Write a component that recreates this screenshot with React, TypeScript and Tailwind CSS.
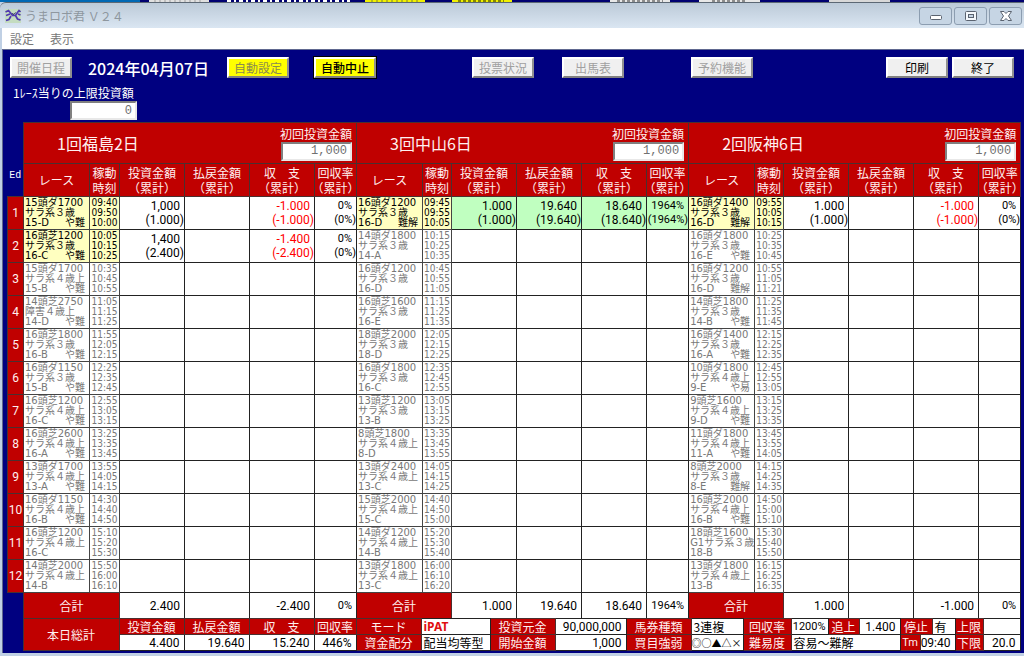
import React, { useState } from "react";
import clsx from "clsx";

interface Result {
  bet: [string, string];
  payout?: [string, string];
  balance: [string, string];
  rate: [string, string];
  hit?: boolean;
}

interface Race {
  title: string;
  grade: string;
  code: string;
  level?: string;
  times: [string, string, string];
  result?: Result;
}

interface Venue {
  id: string;
  name: string;
  races: Race[];
  total: [string, string, string, string];
}

const race = (
  title: string,
  grade: string,
  code: string,
  level: string,
  times: string,
  result?: Result
): Race => ({
  title,
  grade,
  code,
  level,
  times: times.split(" ") as [string, string, string],
  result,
});

const venues: Venue[] = [
  {
    id: "fukushima",
    name: "1回福島2日",
    total: ["2.400", "", "-2.400", "0%"],
    races: [
      race("15頭ダ1700", "サラ系３歳", "15-D", "や難", "09:40 09:50 10:00", {
        bet: ["1,000", "(1.000)"],
        balance: ["-1.000", "(-1.000)"],
        rate: ["0%", "(0%)"],
      }),
      race("16頭芝1200", "サラ系３歳", "16-C", "や難", "10:05 10:15 10:25", {
        bet: ["1,400", "(2.400)"],
        balance: ["-1.400", "(-2.400)"],
        rate: ["0%", "(0%)"],
      }),
      race("15頭ダ1700", "サラ系４歳上", "15-B", "や難", "10:35 10:45 10:55"),
      race("14頭芝2750", "障害４歳上", "14-D", "や難", "11:05 11:15 11:25"),
      race("16頭芝1800", "サラ系３歳", "16-B", "や難", "11:55 12:05 12:15"),
      race("16頭ダ1150", "サラ系３歳", "15-B", "や難", "12:25 12:35 12:45"),
      race("16頭芝1200", "サラ系４歳上", "16-C", "や難", "12:55 13:05 13:15"),
      race("16頭芝2600", "サラ系４歳上", "16-A", "や難", "13:25 13:35 13:45"),
      race("13頭ダ1700", "サラ系４歳上", "13-A", "や難", "13:55 14:05 14:15"),
      race("16頭ダ1150", "サラ系４歳上", "16-B", "や難", "14:30 14:40 14:50"),
      race("16頭芝1200", "サラ系４歳上", "16-C", "", "15:10 15:20 15:30"),
      race("14頭芝2000", "サラ系４歳上", "14-B", "", "15:50 16:00 16:10"),
    ],
  },
  {
    id: "nakayama",
    name: "3回中山6日",
    total: ["1.000", "19.640", "18.640", "1964%"],
    races: [
      race("16頭ダ1200", "サラ系３歳", "16-D", "難解", "09:45 09:55 10:05", {
        bet: ["1.000", "(1.000)"],
        payout: ["19.640", "(19.640)"],
        balance: ["18.640", "(18.640)"],
        rate: ["1964%", "(1964%)"],
        hit: true,
      }),
      race("14頭ダ1800", "サラ系３歳", "14-A", "", "10:15 10:25 10:35"),
      race("16頭ダ1200", "サラ系３歳", "16-D", "", "10:45 10:55 11:05"),
      race("16頭芝1600", "サラ系３歳", "16-E", "", "11:15 11:25 11:35"),
      race("18頭芝2000", "サラ系３歳", "18-D", "", "12:05 12:15 12:25"),
      race("16頭ダ1800", "サラ系３歳", "16-C", "", "12:35 12:45 12:55"),
      race("13頭芝1200", "サラ系３歳", "13-B", "", "13:05 13:15 13:25"),
      race("8頭芝1800", "サラ系４歳上", "8-D", "", "13:35 13:45 13:55"),
      race("13頭ダ2400", "サラ系４歳上", "13-C", "", "14:05 14:15 14:25"),
      race("15頭芝2000", "サラ系４歳上", "15-C", "", "14:40 14:50 15:00"),
      race("14頭ダ1200", "サラ系４歳上", "14-B", "", "15:20 15:30 15:40"),
      race("13頭ダ1800", "サラ系４歳上", "13-C", "", "16:00 16:10 16:20"),
    ],
  },
  {
    id: "hanshin",
    name: "2回阪神6日",
    total: ["1.000", "", "-1.000", "0%"],
    races: [
      race("16頭ダ1400", "サラ系３歳", "16-D", "難解", "09:55 10:05 10:15", {
        bet: ["1.000", "(1.000)"],
        balance: ["-1.000", "(-1.000)"],
        rate: ["0%", "(0%)"],
      }),
      race("16頭ダ1800", "サラ系３歳", "16-E", "や難", "10:25 10:35 10:45"),
      race("16頭ダ1200", "サラ系３歳", "16-D", "難解", "10:55 11:05 11:21"),
      race("14頭芝1800", "サラ系３歳", "14-B", "や難", "11:25 11:35 11:45"),
      race("16頭ダ1400", "サラ系３歳", "16-A", "や難", "12:15 12:25 12:35"),
      race("10頭ダ1800", "サラ系４歳上", "9-E", "や易", "12:45 12:55 13:05"),
      race("9頭芝1600", "サラ系４歳上", "9-D", "や難", "13:15 13:25 13:35"),
      race("11頭ダ1800", "サラ系４歳上", "11-A", "や難", "13:45 13:55 14:05"),
      race("8頭芝2000", "サラ系３歳", "8-E", "難解", "14:15 14:25 14:35"),
      race("16頭芝2000", "サラ系４歳上", "16-B", "や難", "14:50 15:00 15:10"),
      race("18頭芝1600", "G1サラ系３歳", "18-B", "", "15:30 15:40 15:50"),
      race("13頭ダ1800", "サラ系４歳上", "13-B", "", "16:15 16:25 16:35"),
    ],
  },
];

const numFont = "font-['Roboto','Noto_Sans_CJK_JP',sans-serif]";
const raceFont = "font-['DejaVu_Sans','Noto_Sans_CJK_JP',sans-serif] text-[10px] leading-[10px]";
const timeFont =
  "font-['DejaVu_Sans_Condensed','Liberation_Sans',sans-serif] text-[10px] leading-[10px]";
const redCell = "border border-[#4a3030] bg-[#c00000] text-[#fff0f0] font-normal p-0";
const whiteCell = "border border-[#222] bg-white text-black p-0";

interface FormButtonProps {
  children: React.ReactNode;
  tone?: "gray" | "yellow";
  disabled?: boolean;
  focused?: boolean;
  className?: string;
}

const FormButton: React.FC<FormButtonProps> = ({
  children,
  tone = "gray",
  disabled,
  focused,
  className,
}) => (
  <button
    type="button"
    disabled={disabled}
    className={clsx(
      "flex h-[21px] w-[62px] shrink-0 items-center justify-center border-2 border-t-white border-l-white border-r-[#909090] border-b-[#808080] text-[12px] leading-4 whitespace-nowrap",
      tone === "yellow" ? "bg-[#ffff00]" : "bg-[#f0f0f0]",
      disabled && tone === "yellow" && "text-[#8a8a50]",
      disabled && tone === "gray" && "text-[#a0a0a0]",
      !disabled && "text-black",
      focused && "font-medium outline outline-1 outline-black",
      className
    )}
  >
    {children}
  </button>
);

const amountInput =
  "border-2 border-t-[#808080] border-l-[#808080] border-r-[#e8e8e8] border-b-[#e8e8e8] bg-white text-right font-['Liberation_Mono',monospace] text-[12px] leading-3 text-[#707070] outline-none";

const VenueHeader: React.FC<{ venue: Venue }> = ({ venue }) => {
  const [amount, setAmount] = useState("1,000");
  return (
    <th colSpan={6} className={redCell}>
      <div className="flex items-center justify-between pl-[33px]">
        <span className="text-[16px] leading-5">{venue.name}</span>
        <div className="flex flex-col items-end pr-1">
          <label htmlFor={`first-${venue.id}`} className="text-[12px] leading-4">
            初回投資金額
          </label>
          <input
            id={`first-${venue.id}`}
            value={amount}
            onChange={(e) => setAmount(e.target.value)}
            className={clsx(amountInput, "h-[19px] w-[71px] pr-[3px]")}
          />
        </div>
      </div>
    </th>
  );
};

const columnHeads: [string, string][] = [
  ["稼動", "時刻"],
  ["投資金額", "（累計）"],
  ["払戻金額", "（累計）"],
  ["収　支", "（累計）"],
  ["回収率", "（累計）"],
];

const ColumnHeads: React.FC = () => (
  <>
    <th className={clsx(redCell, "text-[12px]")}>レース</th>
    {columnHeads.map(([top, bottom]) => (
      <th key={top} className={clsx(redCell, "text-[12px] leading-[15px] whitespace-nowrap")}>
        <div>{top}</div>
        <div className="flex justify-center">{bottom}</div>
      </th>
    ))}
  </>
);

interface AmountCellProps {
  values?: [string, string];
  hit?: boolean;
  small?: boolean;
}

const AmountCell: React.FC<AmountCellProps> = ({ values, hit, small }) => (
  <td
    className={clsx(
      "border border-[#222] p-0 text-right leading-[14px] whitespace-nowrap",
      numFont,
      small ? "text-[11px]" : "text-[12px]",
      hit ? "bg-[#c0ffc0]" : "bg-white",
      values && values[0].startsWith("-") ? "text-[#ff0000]" : "text-black"
    )}
  >
    {values && (
      <>
        <div className="pr-1">{values[0]}</div>
        <div>{values[1]}</div>
      </>
    )}
  </td>
);

const RaceCells: React.FC<{ race: Race }> = ({ race }) => {
  const { result } = race;
  const tone = result ? "bg-[#ffffc0] text-black" : "bg-white text-[#787878]";
  return (
    <>
      <td className={clsx("border border-[#444] p-0 pl-px whitespace-nowrap", raceFont, tone)}>
        <div>{race.title}</div>
        <div>{race.grade}</div>
        <div className="flex justify-between pr-1">
          <span>{race.code}</span>
          <span>{race.level}</span>
        </div>
      </td>
      <td className={clsx("border border-[#444] p-0 text-center", timeFont, tone)}>
        {race.times.map((t) => (
          <div key={t}>{t}</div>
        ))}
      </td>
      <AmountCell values={result?.bet} hit={result?.hit} />
      <AmountCell values={result?.payout} hit={result?.hit} />
      <AmountCell values={result?.balance} hit={result?.hit} />
      <AmountCell values={result?.rate} hit={result?.hit} small />
    </>
  );
};

const RaceTable: React.FC = () => (
  <table className="w-full table-fixed border-collapse">
    <colgroup>
      <col className="w-[16px]" />
      {venues.map((v, i) => (
        <React.Fragment key={v.id}>
          <col className="w-[66px]" />
          <col className={i === 0 ? "w-[30px]" : "w-[29px]"} />
          <col className="w-[65px]" />
          <col className="w-[65px]" />
          <col className="w-[65px]" />
          <col className="w-[42px]" />
        </React.Fragment>
      ))}
    </colgroup>
    <thead>
      <tr className="h-[41px]">
        <td className="p-0" />
        {venues.map((v) => (
          <VenueHeader key={v.id} venue={v} />
        ))}
      </tr>
      <tr className="h-[33px]">
        <th className="p-0 pb-2 font-['Liberation_Mono',monospace] text-[10px] font-normal text-white">
          Ed
        </th>
        {venues.map((v) => (
          <ColumnHeads key={v.id} />
        ))}
      </tr>
    </thead>
    <tbody>
      {venues[0].races.map((_, i) => (
        <tr key={i} className="h-[33px]">
          <th className={clsx(redCell, numFont, "text-[12px]")}>{i + 1}</th>
          {venues.map((v) => (
            <RaceCells key={v.id} race={v.races[i]} />
          ))}
        </tr>
      ))}
      <tr className="h-[26px]">
        <td className="p-0" />
        {venues.map((v) => (
          <React.Fragment key={v.id}>
            <th colSpan={2} className={clsx(redCell, "text-[12px]")}>
              合計
            </th>
            {v.total.map((t, i) => (
              <td
                key={i}
                className={clsx(
                  whiteCell,
                  numFont,
                  "pr-1 text-right leading-4",
                  i === 3 ? "text-[11px]" : "text-[12px]"
                )}
              >
                {t}
              </td>
            ))}
          </React.Fragment>
        ))}
      </tr>
    </tbody>
  </table>
);

interface CellProps {
  children?: React.ReactNode;
  span?: number;
  small?: boolean;
}

const Head: React.FC<CellProps> = ({ children, span }) => (
  <th colSpan={span} className={clsx(redCell, "text-[12px] leading-[14px] whitespace-nowrap")}>
    {children}
  </th>
);

const Num: React.FC<CellProps> = ({ children, span, small }) => (
  <td
    colSpan={span}
    className={clsx(
      whiteCell,
      numFont,
      "text-right leading-[14px] whitespace-nowrap",
      small ? "pr-[2px] text-[11px]" : "pr-1 text-[12px]"
    )}
  >
    {children}
  </td>
);

const Txt: React.FC<CellProps> = ({ children, span }) => (
  <td
    colSpan={span}
    className={clsx(whiteCell, "pl-[2px] text-[12px] leading-[14px] whitespace-nowrap")}
  >
    {children}
  </td>
);

const SummaryTable: React.FC = () => (
  <table className="-mt-px w-full table-fixed border-collapse">
    <colgroup>
      <col className="w-[16px]" />
      <col className="w-[96px]" />
      <col className="w-[65px]" />
      <col className="w-[65px]" />
      <col className="w-[65px]" />
      <col className="w-[42px]" />
      <col className="w-[65px]" />
      <col className="w-[69px]" />
      <col className="w-[65px]" />
      <col className="w-[71px]" />
      <col className="w-[65px]" />
      <col className="w-[52px]" />
      <col className="w-[48px]" />
      <col className="w-[37px]" />
      <col className="w-[31px]" />
      <col className="w-[41px]" />
      <col className="w-[20px]" />
      <col className="w-[12px]" />
      <col className="w-[23px]" />
      <col className="w-[28px]" />
      <col className="w-[37px]" />
    </colgroup>
    <tbody>
      <tr className="h-[16px]">
        <td rowSpan={2} className="p-0" />
        <th rowSpan={2} className={clsx(redCell, "text-[12px] leading-4")}>
          本日総計
        </th>
        <Head>投資金額</Head>
        <Head>払戻金額</Head>
        <Head>収　支</Head>
        <Head>回収率</Head>
        <Head>モード</Head>
        <td
          className={clsx(
            whiteCell,
            "pl-[2px] font-['Noto_Sans',sans-serif] text-[12px] leading-[14px] font-bold"
          )}
        >
          <span className="text-[#e01010]">iPAT</span>
        </td>
        <Head>投資元金</Head>
        <Num>90,000,000</Num>
        <Head>馬券種類</Head>
        <Txt>3連複</Txt>
        <Head>回収率</Head>
        <Num small>1200%</Num>
        <Head>追上</Head>
        <Num>1.400</Num>
        <Head span={2}>停止</Head>
        <Txt>有</Txt>
        <Head>上限</Head>
        <Num />
      </tr>
      <tr className="h-[16px]">
        <Num>4.400</Num>
        <Num>19.640</Num>
        <Num>15.240</Num>
        <Num>446%</Num>
        <Head>資金配分</Head>
        <Txt>配当均等型</Txt>
        <Head>開始金額</Head>
        <Num>1,000</Num>
        <Head>買目強弱</Head>
        <td className={clsx(whiteCell, "text-[10px] leading-[14px] whitespace-nowrap")}>
          ◎○▲△×
        </td>
        <Head>難易度</Head>
        <Txt span={3}>容易～難解</Txt>
        <th className={clsx(redCell, numFont, "text-[11px] leading-[14px]")}>Tm</th>
        <Num span={2}>09:40</Num>
        <Head>下限</Head>
        <Num>20.0</Num>
      </tr>
    </tbody>
  </table>
);

const AppIcon: React.FC = () => (
  <svg viewBox="0 0 16 14" className="h-[14px] w-4" aria-hidden="true">
    <rect width="16" height="14" fill="#c4dcc0" />
    <path
      d="M0.5 3l3-1.500 2.500 3 1.500 2h3l2-3 1.500-2 1.500 1.500M6 7l-2 3.500-3 1M5 5l-4 1.500M10.500 6.500l2 3.500 3 1M13 5l2.500 1"
      fill="none"
      stroke="#5038b0"
      strokeWidth="1.700"
    />
    <path d="M7 4.500l2 1 1.500-2" stroke="#303060" fill="none" />
  </svg>
);

const captionButton =
  "flex h-[18px] w-[33px] items-center justify-center rounded-[3px] border border-[#8c9db0] bg-[#c6d5e4]";

const TitleBar: React.FC = () => (
  <header className="flex h-[26px] items-center rounded-tl-md border-t border-[#5c6874] bg-linear-to-b from-[#bccad8] to-[#dae6f2] pr-[2px] pl-[5px]">
    <AppIcon />
    <h1 className="ml-1 text-[12px] leading-5 text-[#8e979f]">うまロボ君 Ｖ２４</h1>
    <div className="ml-auto flex gap-[2px] pt-px">
      <button type="button" aria-label="最小化" className={captionButton}>
        <svg viewBox="0 0 12 10" className="h-[10px] w-3">
          <rect x="0.5" y="4.5" width="11" height="4" rx="1" fill="#fff" stroke="#5a6370" />
        </svg>
      </button>
      <button type="button" aria-label="最大化" className={captionButton}>
        <svg viewBox="0 0 12 10" className="h-[10px] w-3">
          <rect x="0.5" y="0.5" width="11" height="9" rx="1" fill="#f4f8fc" stroke="#5a6370" />
          <rect x="3.5" y="3.5" width="5" height="3" fill="#c6d5e4" stroke="#5a6370" />
        </svg>
      </button>
      <button type="button" aria-label="閉じる" className={captionButton}>
        <svg viewBox="0 0 12 10" className="h-[10px] w-3">
          <path
            d="M0.500 0.500h3.500l2 2 2-2h3.500L8.500 5l3 4.500H8L6 7.500 4 9.500H0.500l3-4.500z"
            fill="#fff"
            stroke="#5a6370"
          />
        </svg>
      </button>
    </div>
  </header>
);

// Lower edge of the window that sits behind this one
const BackdropStrip: React.FC = () => (
  <svg viewBox="0 0 1024 2" preserveAspectRatio="none" className="h-[2px] w-full" aria-hidden="true">
    <rect width="1024" height="2" fill="#000070" />
    <rect width="140" height="2" fill="#0068b4" />
    <rect x="149" width="60" height="2" fill="#e0e0e0" />
    <path d="M154 1h48M704 1h48M834 1h48" stroke="#a0a0a0" strokeDasharray="2 3" />
    <path d="M227 1h123" stroke="#fff" strokeWidth="2" strokeDasharray="4 3 2 3" />
    <rect x="365" width="60" height="2" fill="#f0f000" />
    <rect x="452" width="60" height="2" fill="#f0f000" />
    <path d="M371 1h48" stroke="#808030" strokeDasharray="2 3" />
    <path d="M458 1h46" stroke="#202000" strokeDasharray="3 2" />
    <rect x="610" width="60" height="2" fill="#e8e8e8" />
    <rect x="699" width="61" height="2" fill="#e8e8e8" />
    <rect x="829" width="61" height="2" fill="#d8d8d8" />
    <path d="M617 1h46M712 1h34" stroke="#303030" strokeDasharray="3 2" />
  </svg>
);

const App: React.FC = () => {
  const [limit, setLimit] = useState("0");

  return (
    <div className="flex min-h-screen flex-col bg-[#c0d0e4] font-['Noto_Sans_CJK_JP',sans-serif]">
      <BackdropStrip />
      <TitleBar />
      <nav className="ml-[2px] flex h-[21px] items-center gap-4 bg-white pl-2 text-[12px] leading-4 text-[#777]">
        <button type="button">設定</button>
        <button type="button">表示</button>
      </nav>
      <main className="mb-[3px] ml-[2px] flex-1 border-t border-l border-[#606890] bg-[#000080] pr-1 pl-1">
        <div className="flex h-[35px] items-center pr-[6px] pl-[3px]">
          <FormButton disabled>開催日程</FormButton>
          <time
            dateTime="2024-04-07"
            className="ml-4 w-[139px] text-[16px] leading-6 font-medium whitespace-nowrap text-white"
          >
            2024年04月07日
          </time>
          <FormButton disabled tone="yellow">
            自動設定
          </FormButton>
          <FormButton tone="yellow" focused className="ml-[25px]">
            自動中止
          </FormButton>
          <FormButton disabled className="ml-[96px]">
            投票状況
          </FormButton>
          <FormButton disabled className="ml-7">
            出馬表
          </FormButton>
          <FormButton disabled className="ml-[67px]">
            予約機能
          </FormButton>
          <div className="ml-auto flex gap-1">
            <FormButton>印刷</FormButton>
            <FormButton>終了</FormButton>
          </div>
        </div>
        <div className="flex w-[130px] flex-col pb-[2px] pl-[6px]">
          <label
            htmlFor="race-limit"
            className="text-[12px] leading-4 whitespace-nowrap text-white"
          >
            1ﾚｰｽ当りの上限投資額
          </label>
          <input
            id="race-limit"
            value={limit}
            onChange={(e) => setLimit(e.target.value)}
            className={clsx(amountInput, "h-[19px] w-[67px] self-end pr-[3px]")}
          />
        </div>
        <RaceTable />
        <SummaryTable />
      </main>
    </div>
  );
};

export default App;
